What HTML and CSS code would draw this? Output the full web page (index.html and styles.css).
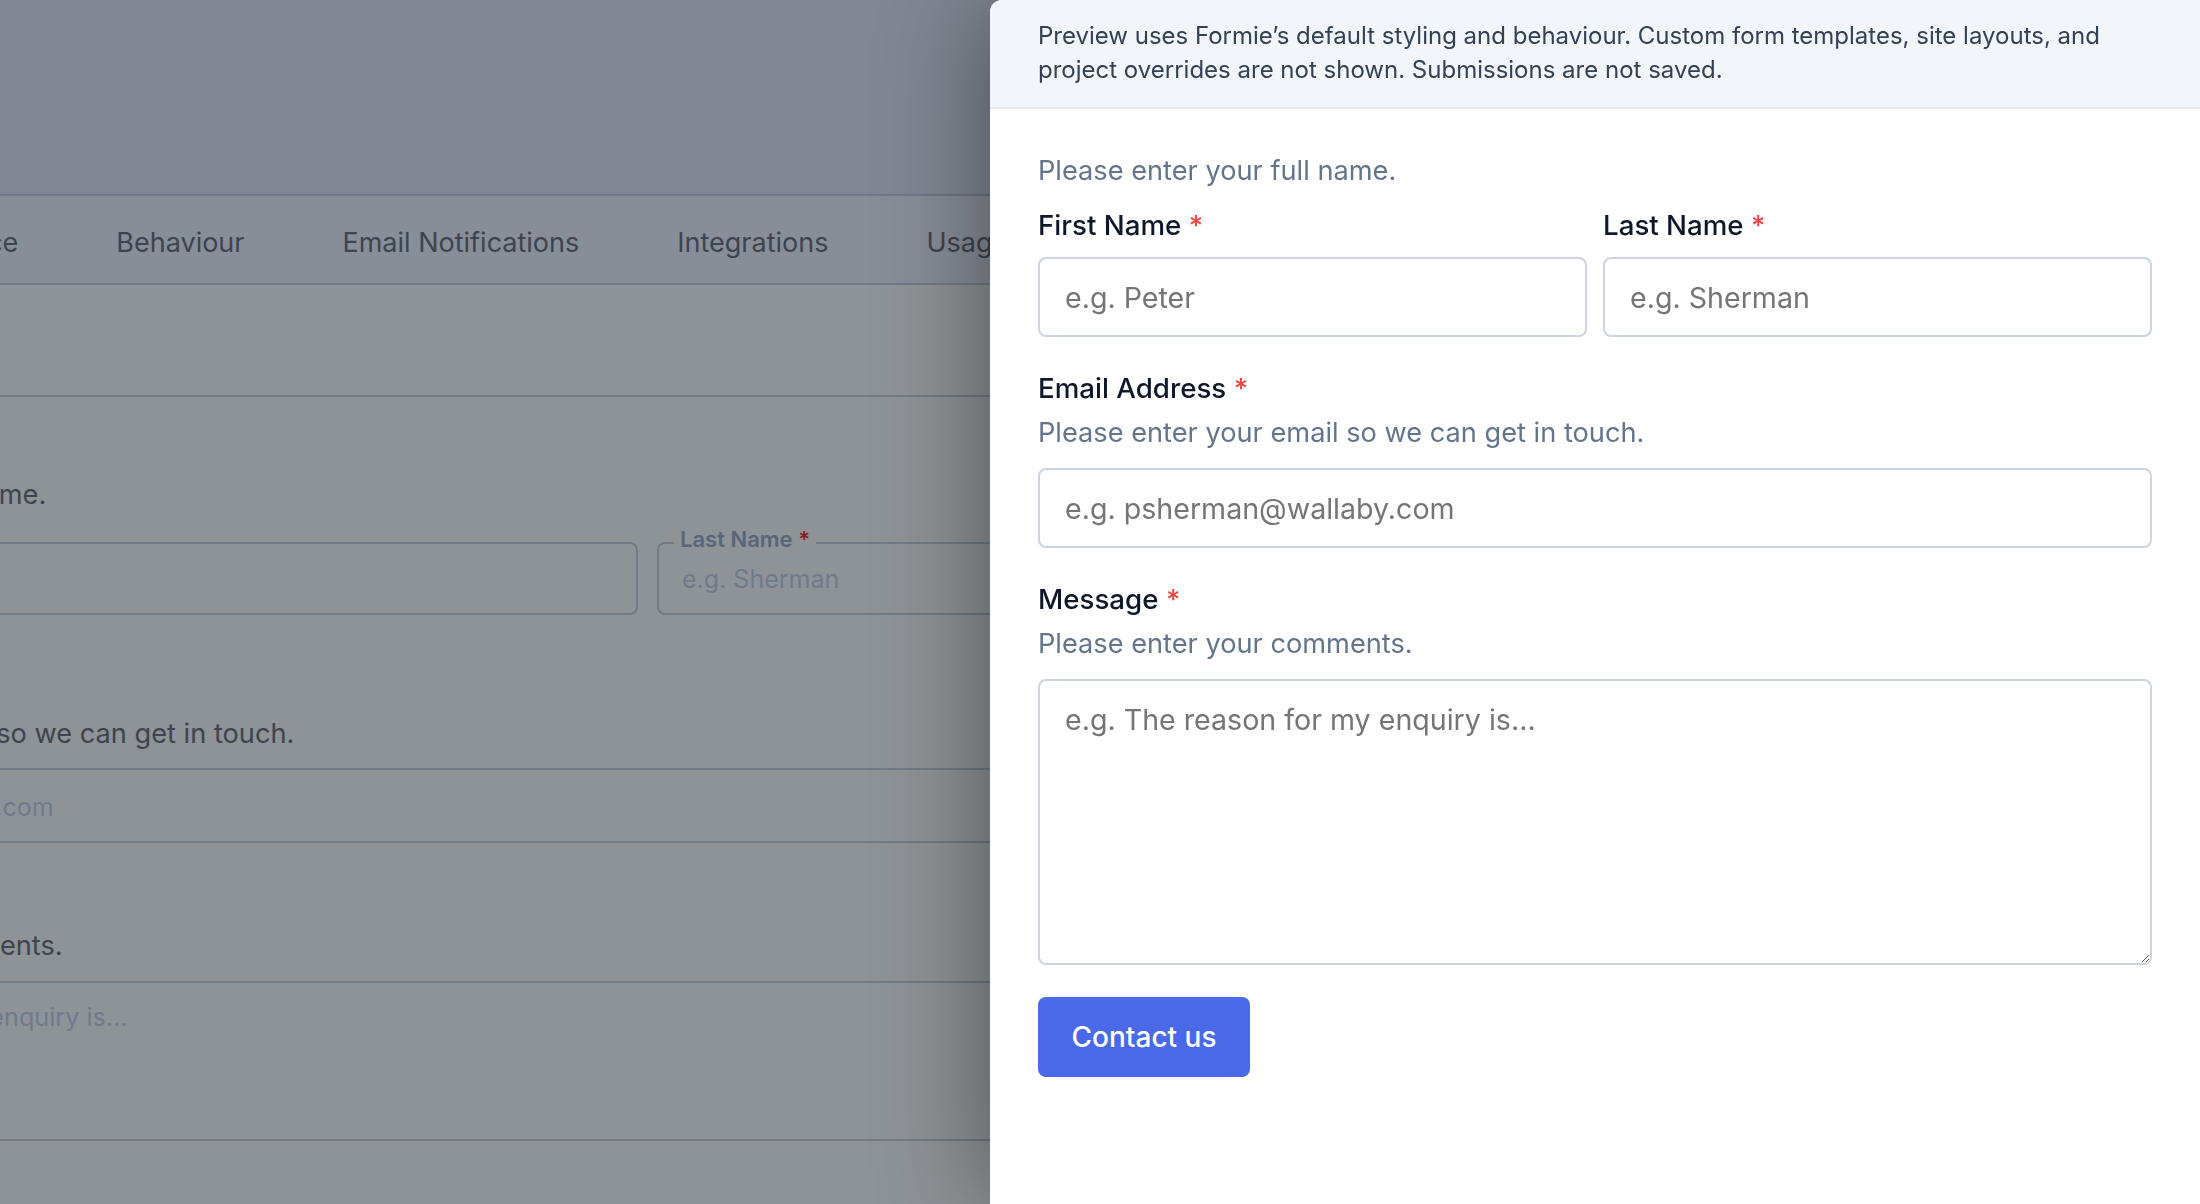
FILE: index.html
```html
<!DOCTYPE html>
<html lang="en">
<head>
  <meta charset="UTF-8" />
  <title>Form preview</title>
  <link rel="stylesheet" href="styles.css">
</head>
<body>
  <!-- dimmed builder page behind the drawer -->
  <div class="page">
    <div class="page-header"></div>
    <nav class="page-tabs">
      <div class="tabs-track">
        <span>Appearance</span>
        <span>Behaviour</span>
        <span>Email Notifications</span>
        <span>Integrations</span>
        <span>Usage</span>
      </div>
    </nav>
    <div class="page-toolbar"></div>
    <div class="page-form">
      <p class="bg-hint">Please enter your full name.</p>
      <div class="bg-row">
        <fieldset class="bg-field"><legend>First Name <i>*</i></legend><span class="bg-ph">e.g. Peter</span></fieldset>
        <fieldset class="bg-field"><legend>Last Name <i>*</i></legend><span class="bg-ph">e.g. Sherman</span></fieldset>
      </div>
      <p class="bg-hint bg-hint-email">Please enter your email so we can get in touch.</p>
      <fieldset class="bg-field bg-wide"><legend>Email Address <i>*</i></legend><span class="bg-ph">e.g. psherman@wallaby.com</span></fieldset>
      <p class="bg-hint bg-hint-msg">Please enter your comments.</p>
      <fieldset class="bg-field bg-wide bg-area"><legend>Message <i>*</i></legend><span class="bg-ph">e.g. The reason for my enquiry is...</span></fieldset>
    </div>
  </div>

  <aside class="drawer">
    <div class="drawer-note">Preview uses Formie’s default styling and behaviour. Custom form templates, site layouts, and project overrides are not shown. Submissions are not saved.</div>
    <form class="drawer-form">
      <div class="group">
        <p class="hint hint-top">Please enter your full name.</p>
        <div class="name-row">
          <div class="field">
            <label for="fname">First Name <span class="req">*</span></label>
            <input id="fname" type="text" placeholder="e.g. Peter">
          </div>
          <div class="field">
            <label for="lname">Last Name <span class="req">*</span></label>
            <input id="lname" type="text" placeholder="e.g. Sherman">
          </div>
        </div>
      </div>

      <div class="group">
        <label class="with-hint" for="email">Email Address <span class="req">*</span></label>
        <p class="hint">Please enter your email so we can get in touch.</p>
        <input id="email" type="email" placeholder="e.g. psherman@wallaby.com">
      </div>

      <div class="group">
        <label class="with-hint" for="msg">Message <span class="req">*</span></label>
        <p class="hint">Please enter your comments.</p>
        <textarea id="msg" placeholder="e.g. The reason for my enquiry is..."></textarea>
      </div>

      <button type="button" class="submit">Contact us</button>
    </form>
  </aside>
</body>
</html>
```

FILE: styles.css
```css
body { margin: 0; height: 1204px; overflow: hidden; background: #8e9397; font-family: Inter, "Noto Sans", sans-serif; }

/* backdrop page */
.page-header { height: 194px; background: #7f8893; border-bottom: 2px solid #6f7784; }
.page-tabs { height: 81px; padding-top: 6px; display: flex; align-items: center; background: #878e97; border-bottom: 2px solid #737b87; overflow: hidden; }
.tabs-track { display: flex; gap: 98px; margin-left: -137px; font-size: 27px; color: #3d4450; white-space: nowrap; }
.page-toolbar { height: 110px; border-bottom: 2px solid #737b87; }
.page-form { margin-left: -312px; width: 2400px; }
.bg-hint { margin: 78px 0 0; font-size: 27.2px; line-height: 40px; color: #3d4450; }
.bg-hint-email { margin-top: 99px; }
.bg-hint-msg { margin-top: 83px; }
.bg-row { display: flex; gap: 19px; margin-top: 11px; }
.bg-field { box-sizing: border-box; width: 950px; margin: 0; padding: 4px 23px 19px; border: 2px solid #707a89; border-radius: 8px; }
.bg-field legend { margin-left: -8px; padding: 0 6px 8px; font-size: 22px; line-height: 26px; font-weight: 600; color: #58657a; }
.bg-field legend i { font-style: normal; color: #8a1d22; }
.bg-ph { display: block; font-size: 25px; line-height: 30px; color: #6f7b8c; }
.bg-wide { width: 1500px; margin-top: -2px; padding-top: 6px; }
.bg-area { margin-top: -1px; padding-top: 3px; padding-bottom: 107px; }
.bg-area .bg-ph { font-size: 25.2px; }

/* preview drawer */
.drawer { position: fixed; top: 0; left: 990px; right: 0; bottom: 0; background: #fff; border-top-left-radius: 12px; box-shadow: 0 0 110px rgba(0, 0, 0, 0.45); overflow: hidden; }
.drawer-note { padding: 19px 48px 20px; background: #f2f5f9; border-bottom: 2px solid #e2e7ef; font-size: 24px; line-height: 34px; color: #334155; }
.drawer-form { padding: 42px 48px 0; }
.group { margin-bottom: 31px; }
.hint { margin: 0 0 15px; font-size: 27.2px; line-height: 40px; color: #64748b; }
.hint-top { margin-bottom: 14px; }
.name-row { display: grid; grid-template-columns: 1fr 1fr; gap: 16px; }
label { display: block; margin-bottom: 12px; font-size: 27.7px; line-height: 40px; font-weight: 500; color: #0f172a; }
label.with-hint { margin-bottom: 5px; }
.req { color: #ef4444; }
input, textarea { display: block; box-sizing: border-box; width: 100%; margin: 0; border: 2px solid #cbd5e1; border-radius: 8px; font-family: inherit; font-size: 28.6px; color: #0f172a; background: #fff; }
input { height: 80px; padding: 0 25px; }
textarea { height: 286px; padding: 19px 25px; line-height: 40px; resize: vertical; }
input::placeholder, textarea::placeholder { color: #757575; }
.submit { margin-top: 1px; width: 212px; height: 80px; border: 0; border-radius: 8px; background: #4a69e8; color: #fff; font-family: inherit; font-size: 28px; font-weight: 500; cursor: pointer; }
```
